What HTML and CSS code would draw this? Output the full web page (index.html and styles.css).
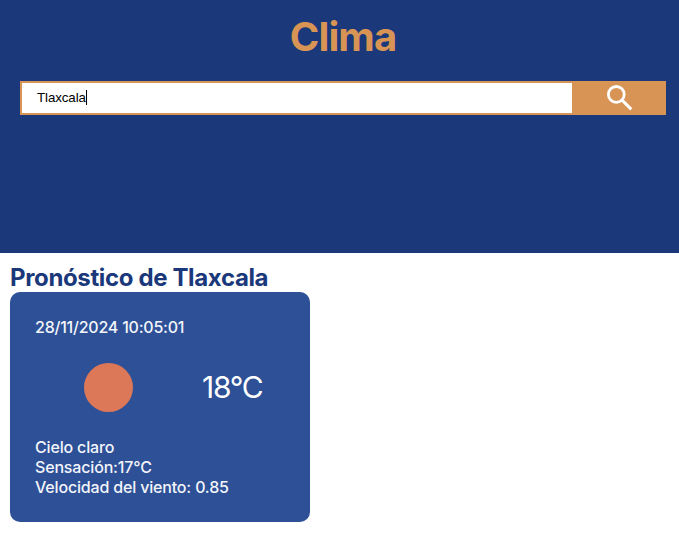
FILE: index.html
```html
<!DOCTYPE html>
<html lang="es">
<head>
<meta charset="utf-8">
<title>Clima</title>
<link rel="stylesheet" href="styles.css">
</head>
<body>
<header class="header">
  <h1 class="title">Clima</h1>
  <form class="search">
    <div class="field"><span class="value">Tlaxcala</span><span class="caret"></span></div>
    <button class="submit" type="button" aria-label="Buscar">
      <svg class="icon" viewBox="0 0 28 28" fill="none" stroke="#fff"><circle cx="11.3" cy="10.4" r="7.9" stroke-width="2.8"/><path d="M16.8 15.9L26.3 25.4" stroke-width="3"/></svg>
    </button>
  </form>
</header>
<main class="forecast">
  <h2 class="heading">Pronóstico de Tlaxcala</h2>
  <article class="card">
    <p class="line line-date">28/11/2024 10:05:01</p>
    <div class="current"><span class="sun"></span><span class="temp">18°C</span></div>
    <p class="line">Cielo claro</p>
    <p class="line">Sensación:17°C</p>
    <p class="line">Velocidad del viento: 0.85</p>
  </article>
</main>
</body>
</html>
```
FILE: styles.css
```css
* { box-sizing: border-box; margin: 0; padding: 0; }
body { font-family: Inter, sans-serif; background: #fff; }
.header { height: 253px; padding: 12px 13px 0 20px; background: #1a387a; }
.title { height: 69px; line-height: 50px; font-size: 40px; font-weight: 700; letter-spacing: -0.9px; text-align: center; color: #d79455; }
.search { display: flex; height: 34px; }
.field { flex: 1; display: flex; align-items: center; padding: 0 0 2px 15px; background: #fff; border: 2px solid #d79455; border-right: 0; font: 13.333px "Liberation Sans", sans-serif; color: #000; }
.value { letter-spacing: -0.1px; }
.caret { width: 1px; height: 15px; background: #000; }
.submit { width: 94px; display: flex; align-items: center; justify-content: center; border: 0; background: #d79455; }
.icon { width: 28px; height: 28px; }
.forecast { padding: 10px; }
.heading { font-size: 24px; line-height: 29px; font-weight: 700; letter-spacing: -0.36px; color: #1a387a; }
.card { width: 300px; height: 230px; padding: 25px; border-radius: 10px; background: #2d5096; color: #fff; }
.line { font-size: 16px; line-height: 20px; font-weight: 500; letter-spacing: -0.17px; color: #f3f5fb; }
.line-date { letter-spacing: -0.22px; }
.current { display: flex; align-items: center; height: 100px; }
.sun { width: 49px; height: 49px; margin-left: 49px; border-radius: 50%; background: #dc7757; }
.temp { margin-left: 69px; font-size: 30px; letter-spacing: -1.3px; }
```
